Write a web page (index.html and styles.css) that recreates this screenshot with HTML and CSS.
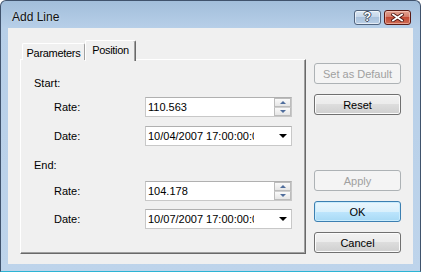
FILE: index.html
```html
<!DOCTYPE html>
<html lang="en">
<head>
  <meta charset="UTF-8">
  <title>Add Line</title>
  <link rel="stylesheet" href="styles.css">
</head>
<body>
<div class="window">
  <div class="titlebar">
    <span class="title">Add Line</span>
    <div class="caption-buttons">
      <button class="cap help">?</button>
      <button class="cap close">
        <svg width="13" height="9" viewBox="0 0 13 9">
          <path d="M2 1.5 L11 7.5 M11 1.5 L2 7.5" stroke="#4a1410" stroke-width="3.4" stroke-linecap="square"/>
          <path d="M2 1.5 L11 7.5 M11 1.5 L2 7.5" stroke="#fff" stroke-width="1.8" stroke-linecap="square"/>
        </svg>
      </button>
    </div>
  </div>

  <div class="client">
    <div class="tabs">
      <div class="tab-strip">
        <span class="tab">Parameters</span>
        <span class="tab active">Position</span>
      </div>
      <div class="panel">
        <div class="group-label">Start:</div>
        <div class="row first">
          <span class="label">Rate:</span>
          <div class="field spin">
            <span class="value">110.563</span>
            <div class="spinner"><span class="up"></span><span class="down"></span></div>
          </div>
        </div>
        <div class="row">
          <span class="label">Date:</span>
          <div class="field combo">
            <span class="value">10/04/2007 17:00:00:0</span>
            <span class="arrow"></span>
          </div>
        </div>

        <div class="group-label second">End:</div>
        <div class="row first-end">
          <span class="label">Rate:</span>
          <div class="field spin">
            <span class="value">104.178</span>
            <div class="spinner"><span class="up"></span><span class="down"></span></div>
          </div>
        </div>
        <div class="row last">
          <span class="label">Date:</span>
          <div class="field combo">
            <span class="value">10/07/2007 17:00:00:0</span>
            <span class="arrow"></span>
          </div>
        </div>
      </div>
    </div>

    <div class="side">
      <button class="btn" disabled>Set as Default</button>
      <button class="btn">Reset</button>
      <div class="spacer"></div>
      <button class="btn" disabled>Apply</button>
      <button class="btn default">OK</button>
      <button class="btn">Cancel</button>
    </div>
  </div>
</div>
</body>
</html>
```

FILE: styles.css
```css
* {
  box-sizing: border-box;
}
body {
  margin: 0;
  font-family: "Liberation Sans", Arial, sans-serif;
  font-size: 11px;
  color: #000;
}
.window {
  width: 421px;
  height: 272px;
  border: 1px solid #40536d;
  border-bottom-color: #2cb4d4;
  border-radius: 6px 6px 0 0;
  background: linear-gradient(#a2bedb, #b7cfe8 27px, #bed4eb);
  display: flex;
  flex-direction: column;
}
.titlebar {
  height: 27px;
  padding: 5px 9px 0 11px;
  display: flex;
  align-items: center;
}
.title {
  flex: 1;
  font-size: 12px;
  color: #111;
  text-shadow: 0 0 3px rgba(255,255,255,0.6);
}
.caption-buttons {
  display: flex;
  gap: 3px;
}
.cap {
  width: 27px;
  height: 15px;
  padding: 0;
  border-radius: 3px;
  display: flex;
  align-items: center;
  justify-content: center;
  font-family: "Liberation Sans", Arial, sans-serif;
}
.help {
  border: 1px solid #50637d;
  background: linear-gradient(#d9e6f3, #c3d5e9 50%, #a9c1dc 50%, #b9cfe6);
  box-shadow: inset 0 0 0 1px rgba(255,255,255,0.6);
  color: #fff;
  font-weight: bold;
  font-size: 12px;
  text-shadow: 1px 0 0 #3d4a5c, -1px 0 0 #3d4a5c, 0 1px 0 #3d4a5c, 0 -1px 0 #3d4a5c;
}
.close {
  border: 1px solid #5a1a14;
  background: linear-gradient(#e3a493, #d27866 50%, #c24a35 50%, #cf6c55);
  box-shadow: inset 0 0 0 1px rgba(255,220,210,0.5);
}

.client {
  flex: 1;
  margin: 0 7px 7px;
  background: #f0f0f0;
  display: flex;
  padding: 12px 12px 10px 12px;
}
.tabs {
  width: 286px;
  display: flex;
  flex-direction: column;
}
.tab-strip {
  height: 20px;
  padding-left: 2px;
  display: flex;
  align-items: flex-end;
  position: relative;
  z-index: 1;
}
.tab {
  height: 17px;
  width: 63px;
  border: 1px solid #fff;
  border-bottom: none;
  border-right-color: #a0a0a0;
  border-radius: 2px 2px 0 0;
  background: #f0f0f0;
  display: flex;
  align-items: center;
  justify-content: center;
  padding-top: 1px;
  letter-spacing: -0.3px;
  white-space: nowrap;
}
.tab.active {
  height: 21px;
  width: 51px;
  margin-bottom: -1px;
  border-right-color: #696969;
  box-shadow: inset -1px 0 0 #a0a0a0;
  padding-top: 0;
  padding-bottom: 2px;
}
.panel {
  flex: 1;
  margin-top: -1px;
  border: 1px solid #fff;
  border-right-color: #696969;
  border-bottom-color: #696969;
  box-shadow: inset -1px -1px 0 #a0a0a0;
  padding: 14px 0 0 13px;
}
.group-label {
  height: 18px;
  line-height: 18px;
}
.group-label.second {
  margin-top: 10px;
}
.row {
  display: flex;
  align-items: center;
  height: 20px;
  margin-top: 9px;
}
.row.first {
  margin-top: 5px;
}
.row.first-end {
  margin-top: 7px;
}
.row.last {
  margin-top: 8px;
}
.label {
  width: 111px;
  padding-left: 20px;
}
.field {
  width: 147px;
  height: 20px;
  border: 1px solid #c8c8c8;
  border-top-color: #b0b0b0;
  background: #fff;
  display: flex;
  align-items: center;
}
.value {
  padding-left: 2px;
  white-space: nowrap;
  overflow: hidden;
}
.spin .value {
  flex: 1;
}
.combo .value {
  width: 108px;
}
.spinner {
  width: 17px;
  height: 18px;
  display: flex;
  flex-direction: column;
}
.spinner span {
  flex: 1;
  border: 1px solid #bcbcbc;
  background: linear-gradient(#fafafa, #e6e6e6);
  display: flex;
  align-items: center;
  justify-content: center;
}
.spinner .down {
  border-top-color: #d0d0d0;
}
.spinner span::after {
  content: "";
  border-left: 3.5px solid transparent;
  border-right: 3.5px solid transparent;
}
.spinner .up::after {
  border-bottom: 3px solid #4f6d9c;
}
.spinner .down::after {
  border-top: 3px solid #4f6d9c;
}
.arrow {
  margin-left: 25px;
  border-left: 4px solid transparent;
  border-right: 4px solid transparent;
  border-top: 4px solid #000;
}

.side {
  width: 87px;
  margin-left: 8px;
  padding-top: 23px;
  display: flex;
  flex-direction: column;
  gap: 10px;
}
.spacer {
  height: 35px;
}
.btn {
  height: 21px;
  padding: 0;
  font-family: "Liberation Sans", Arial, sans-serif;
  font-size: 11px;
  color: #000;
  border: 1px solid #707070;
  border-radius: 3px;
  background: linear-gradient(#f2f2f2, #ebebeb 50%, #dddddd 50%, #cfcfcf);
  box-shadow: inset 0 0 0 1px #fbfbfb;
}
.btn:disabled {
  color: #a0a0a0;
  border-color: #adb2b5;
  background: #f4f4f4;
  box-shadow: none;
}
.btn.default {
  border-color: #3c7fb1;
  background: linear-gradient(#eaf6fd, #d9f0fc 50%, #bee6fd 50%, #a7d9f5);
  box-shadow: inset 0 0 0 1px #c9ecfd;
}
```
